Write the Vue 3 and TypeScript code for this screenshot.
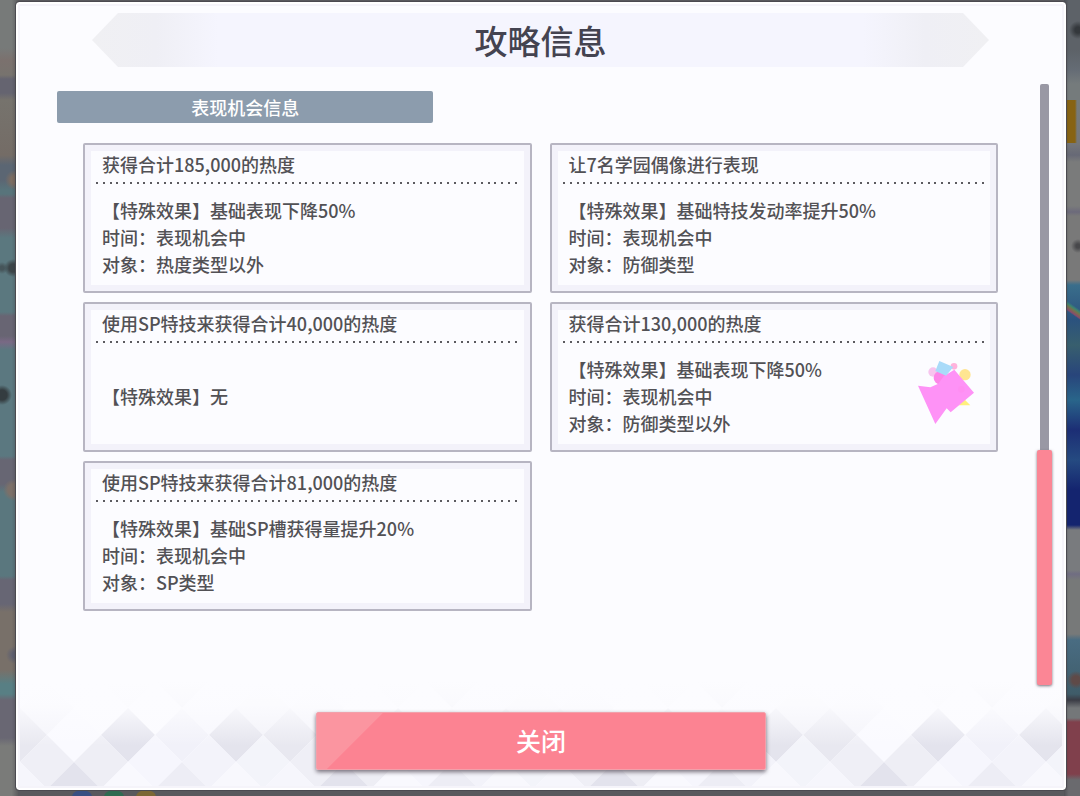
<script setup lang="ts">
import { ref } from 'vue'

interface Chance {
  title: string
  lines: string[]
  sparkle?: boolean
}

interface Tile {
  x: number
  y: number
  fill: string
}

const open = ref(true)

const chances: Chance[] = [
  {
    title: '获得合计185,000的热度',
    lines: ['【特殊效果】基础表现下降50%', '时间：表现机会中', '对象：热度类型以外'],
  },
  {
    title: '让7名学园偶像进行表现',
    lines: ['【特殊效果】基础特技发动率提升50%', '时间：表现机会中', '对象：防御类型'],
  },
  {
    title: '使用SP特技来获得合计40,000的热度',
    lines: ['【特殊效果】无'],
  },
  {
    title: '获得合计130,000的热度',
    lines: ['【特殊效果】基础表现下降50%', '时间：表现机会中', '对象：防御类型以外'],
    sparkle: true,
  },
  {
    title: '使用SP特技来获得合计81,000的热度',
    lines: ['【特殊效果】基础SP槽获得量提升20%', '时间：表现机会中', '对象：SP类型'],
  },
]

// One 270px repeat of the argyle footer: five tiles per row, odd rows shifted by half a tile.
const rows: { y: number; shift: number; fills: string[] }[] = [
  { y: 0, shift: 0, fills: ['#f7f7fd', '#f9f9fe', '#f3f3f9', '#e4e4ee', '#f6f6fc'] },
  { y: 27, shift: 27, fills: ['#f4f4fa', '#fbfbff', '#fbfbff', '#f7f7fd', '#f2f2f8'] },
  { y: 54, shift: 0, fills: ['#e8e8f0', '#fafaff', '#e3e3ed', '#f1f1f9', '#e4e4ed'] },
  { y: 81, shift: 27, fills: ['#efeff6', '#eeeef5', '#f6f6fd', '#f3f3fa', '#f3f4fa'] },
  { y: 108, shift: 0, fills: ['#f6f6fc', '#e3e3ed', '#f9f9fe', '#ededf5', '#f8f8fd'] },
]

const tiles: Tile[] = rows.flatMap((row) =>
  [-1, 0, 1, 2, 3, 4, 5].map((i) => ({
    x: i * 54 + row.shift,
    y: row.y,
    fill: row.fills[(i + 5) % 5],
  })),
)

function diamond(t: Tile): string {
  return `${t.x - 27},${t.y} ${t.x},${t.y - 27} ${t.x + 27},${t.y} ${t.x},${t.y + 27}`
}
</script>

<template>
  <div class="scene">
    <div class="scenery scenery-left"></div>
    <div class="scenery scenery-right"></div>
    <div class="scenery-dots"><i></i><i></i><i></i></div>

    <section v-if="open" class="dialog" role="dialog" aria-labelledby="dialog-title">
      <svg class="argyle" aria-hidden="true">
        <defs>
          <pattern id="argyle-tiles" x="0" y="0" width="270" height="160" patternUnits="userSpaceOnUse">
            <polygon v-for="(t, i) in tiles" :key="i" :points="diamond(t)" :fill="t.fill" />
          </pattern>
          <linearGradient id="argyle-fade" x1="0" y1="0" x2="0" y2="1">
            <stop offset="0" stop-color="#fcfcff" />
            <stop offset="0.22" stop-color="#fcfcff" stop-opacity="0.9" />
            <stop offset="0.6" stop-color="#fcfcff" stop-opacity="0" />
          </linearGradient>
        </defs>
        <rect width="100%" height="108" fill="url(#argyle-tiles)" />
        <rect width="100%" height="108" fill="url(#argyle-fade)" />
      </svg>

      <header class="banner">
        <h1 id="dialog-title">攻略信息</h1>
      </header>

      <div class="body">
        <div class="content">
          <h2 class="tag">表现机会信息</h2>
          <div class="cards">
            <article v-for="(c, i) in chances" :key="i" class="card">
              <h3>{{ c.title }}</h3>
              <svg class="dots" aria-hidden="true">
                <line x1="0" y1="1" x2="100%" y2="1" />
              </svg>
              <div class="effects">
                <p v-for="line in c.lines" :key="line">{{ line }}</p>
              </div>
              <svg v-if="c.sparkle" class="sparkle" viewBox="113 62 168 189" aria-hidden="true">
                <circle cx="158" cy="95" r="14" fill="#f7c5ee" />
                <circle cx="254" cy="103" r="17" fill="#ffe591" />
                <polygon points="236,195 252,177 270,195" fill="#fff07e" />
                <circle cx="180" cy="112" r="20" fill="#fd86e9" />
                <polygon points="113,136 150,141 174,130 190,108 222,88 281,157 211,216 199,204 165,251" fill="#fe92f6" />
                <circle cx="243" cy="147" r="10" fill="#ff8ef2" />
                <circle cx="221" cy="78" r="10" fill="#ffb3dc" />
                <polygon points="177,62 219,80 197,106 165,92" fill="#a9dbf9" />
              </svg>
            </article>
          </div>
        </div>
        <div class="scrollbar" role="scrollbar" aria-label="攻略信息" aria-orientation="vertical" aria-valuenow="100">
          <div class="track"></div>
          <div class="thumb"></div>
        </div>
      </div>

      <footer class="actions">
        <button type="button" class="close" @click="open = false">关闭</button>
      </footer>
    </section>
  </div>
</template>

<style>
body {
  margin: 0;
  background: #59595d;
}
</style>

<style scoped>
.scene {
  position: relative;
  box-sizing: border-box;
  min-height: 100vh;
  padding: 2px 14px 6px 16px;
  display: flex;
  overflow: hidden;
  background: #59595d;
  color: #525155;
  font-family: 'Noto Sans CJK SC', 'Noto Sans', sans-serif;
}

.scenery {
  position: absolute;
  top: 0;
  bottom: 0;
}

.scenery-left {
  left: 0;
  width: 18px;
  background:
    linear-gradient(90deg, transparent 65%, rgba(50, 48, 56, 0.4)),
    radial-gradient(circle at 13px 268px, #3b4448 0 4px, transparent 9px),
    radial-gradient(circle at 2px 268px, #46555a 0 2px, transparent 6px),
    radial-gradient(circle at 2px 395px, #343c40 0 5px, transparent 10px),
    radial-gradient(circle at 14px 490px, #7c7069 0 6px, transparent 11px),
    radial-gradient(circle at 15px 180px, #7d6d62 0 4px, transparent 10px),
    radial-gradient(circle at 15px 655px, #5f6070 0 3px, transparent 9px),
    linear-gradient(
      180deg,
      #777a79 0 48px, #7b716e 60px, #77736e 75px, #656470 79px 93px,
      #76736d 100px, #746c66 155px, #5b6673 165px 180px, #58747b 190px 194px,
      #676572 198px 228px, #5b787f 238px 312px, #686573 316px 336px, #796985 342px,
      #5b7880 350px 456px, #676673 460px 484px, #5a777e 492px 576px,
      #676674 580px 604px, #787069 612px 670px, #587f84 684px 694px,
      #696773 700px 738px, #7a7b79 746px
    );
}

.scenery-right {
  right: 0;
  width: 16px;
  background:
    linear-gradient(270deg, transparent 70%, rgba(45, 45, 52, 0.4)),
    linear-gradient(90deg, #876313 0 11px, transparent 13px) 0 100px / 100% 43px no-repeat,
    radial-gradient(circle at 14px 30px, #34383c 0 3px, transparent 9px),
    radial-gradient(circle at 14px 246px, #48484b 0 2px, transparent 7px),
    linear-gradient(35deg, transparent 42%, #8a4b6c 46%, #75734c 54%, #3b8571 60%, transparent 66%) 0 295px / 100% 32px no-repeat,
    radial-gradient(circle at 12px 680px, #5f4a48 0 4px, transparent 9px),
    linear-gradient(
      180deg,
      #5d6268 0 50px, #656c75 70px, #757b7c 84px 98px, #74767a 144px, #676976 155px,
      #7a7b7b 162px 206px, #6c6a7b 212px, #797979 216px 280px, #3a6e8b 285px,
      #2b527e 320px, #385f6e 345px, #28457b 375px, #29658a 400px, #1c2e75 430px,
      #254a81 460px, #14246f 490px 525px, #797b7e 530px 570px, #706d82 574px,
      #777979 580px 634px, #496c82 640px, #3f5c69 694px, #3b3c45 700px,
      #747779 708px 718px, #80404c 722px 774px, #6a6a6e 780px
    );
}

.scenery-dots {
  position: absolute;
  left: 72px;
  bottom: -8px;
  display: flex;
  gap: 12px;
}

.scenery-dots i {
  width: 20px;
  height: 14px;
  border-radius: 50%;
  background: #394f82;
}

.scenery-dots i:nth-child(2) {
  background: #2f6b51;
}

.scenery-dots i:nth-child(3) {
  background: #7c6735;
}

.dialog {
  position: relative;
  box-sizing: border-box;
  flex: 1;
  min-width: 0;
  padding: 7px 9px 18px 36px;
  display: flex;
  flex-direction: column;
  border: 2px solid #fff;
  outline: 1px solid #4b4a50;
  border-radius: 3px;
  background: #fcfcff;
  box-shadow: inset 0 0 0 2px #f5f4fa;
}

.argyle {
  position: absolute;
  left: 2px;
  right: 2px;
  bottom: 2px;
  width: calc(100% - 4px);
  height: 105px;
}

.banner {
  position: relative;
  height: 54px;
  margin: 2px 66px 0 38px;
  display: flex;
  align-items: center;
  justify-content: center;
  clip-path: polygon(0 50%, 26px 0, calc(100% - 26px) 0, 100% 50%, calc(100% - 26px) 100%, 26px 100%);
  background: linear-gradient(90deg, #f0f0f3 0, #efeff5 64px, #f5f5fe 126px, #f5f5fe calc(100% - 126px), #efeff5 calc(100% - 64px), #f0f0f3 100%);
}

.banner h1 {
  margin: 0;
  font-size: 33px;
  line-height: 54px;
  font-weight: 500;
  color: #444350;
}

.body {
  position: relative;
  flex: 1;
  margin-top: 17px;
  display: flex;
  justify-content: space-between;
}

.content {
  flex: 1;
  min-width: 0;
  padding: 7px 39px 0 3px;
}

.tag {
  width: 40%;
  height: 32px;
  margin: 0;
  border-radius: 2px;
  background: #8c9cad;
  color: #fff;
  font-size: 18px;
  line-height: 32px;
  font-weight: 500;
  text-align: center;
}

.cards {
  margin: 20px 0 0 26px;
  display: grid;
  grid-template-columns: 1fr 1fr;
  gap: 9px 18px;
}

.card {
  position: relative;
  box-sizing: border-box;
  min-height: 150px;
  padding: 6px 11px 12px;
  display: flex;
  flex-direction: column;
  border: 2px solid #b7b5c2;
  border-radius: 2px;
  background: #fcfcff;
  box-shadow: inset 0 0 0 6px #f3f2fa;
}

.card h3 {
  margin: 0 6px;
  font-size: 18px;
  line-height: 27px;
  font-weight: 500;
}

.dots {
  width: 100%;
  height: 2px;
  margin: 4px 0 0;
}

.dots line {
  stroke: #5c5b60;
  stroke-width: 2;
  stroke-dasharray: 2 5 2 5 2 4 2 5;
}

.effects {
  flex: 1;
  margin: 12px 6px 0;
  display: flex;
  flex-direction: column;
  justify-content: center;
}

.effects p {
  margin: 0;
  font-size: 18px;
  line-height: 27px;
  font-weight: 500;
}

.sparkle {
  position: absolute;
  right: 22px;
  top: 57px;
  width: 56px;
  height: 63px;
}

.scrollbar {
  width: 15px;
  margin-right: 3px;
  display: flex;
  flex-direction: column;
  align-items: center;
}

.track {
  flex: 366;
  width: 9px;
  border-radius: 2px 2px 0 0;
  background: #9998a4;
}

.thumb {
  flex: 235;
  width: 15px;
  border-radius: 2px;
  background: #fb8695;
  box-shadow: 0 1px 3px #77717b;
}

.actions {
  position: relative;
  margin: 27px 27px 0 0;
  display: flex;
  justify-content: center;
}

.close {
  width: 450px;
  height: 58px;
  padding: 0 0 2px;
  border: 1px solid #f2a0aa;
  border-radius: 2px;
  background: linear-gradient(135deg, #fb95a0 0 46px, #fc8392 47px);
  box-shadow: 0 2px 4px #77717b;
  color: #fff;
  font: 500 25px/54px 'Noto Sans CJK SC', 'Noto Sans', sans-serif;
  cursor: pointer;
}
</style>
